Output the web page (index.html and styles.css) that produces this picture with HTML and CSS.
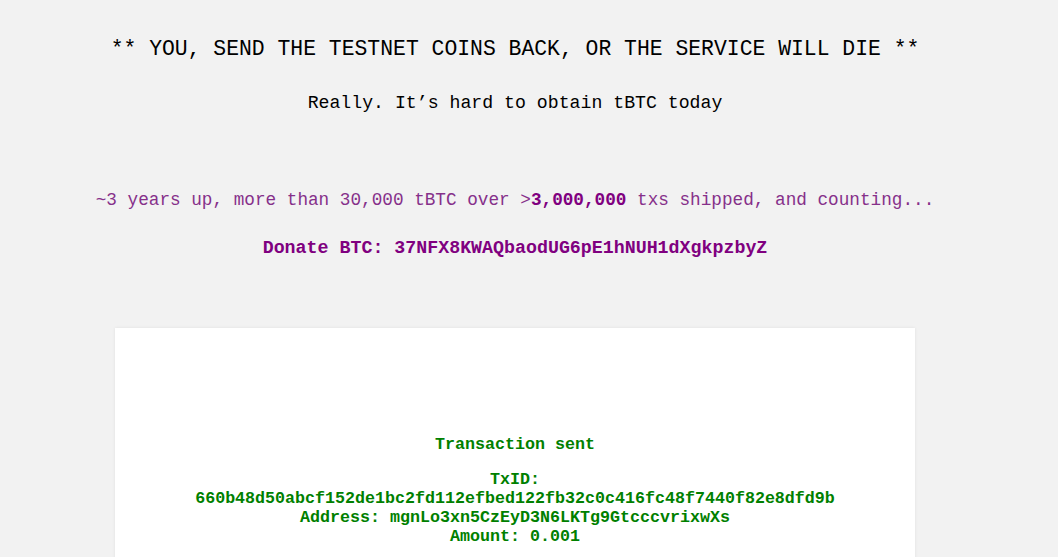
FILE: index.html
```html
<!DOCTYPE html>
<html>
<head>
<meta charset="utf-8">
<title>Testnet Faucet</title>
<link rel="stylesheet" href="styles.css">
</head>
<body>
<div class="page">
  <h1 class="warn">** YOU, SEND THE TESTNET COINS BACK, OR THE SERVICE WILL DIE **</h1>
  <p class="really">Really. It’s hard to obtain tBTC today</p>
  <p class="stats">~3 years up, more than 30,000 tBTC over &gt;<b>3,000,000</b> txs shipped, and counting...</p>
  <p class="donate">Donate BTC: 37NFX8KWAQbaodUG6pE1hNUH1dXgkpzbyZ</p>
  <div class="card">
    <div class="result">
      <div class="title">Transaction sent</div>
      <div>TxID:</div>
      <div>660b48d50abcf152de1bc2fd112efbed122fb32c0c416fc48f7440f82e8dfd9b</div>
      <div>Address: mgnLo3xn5CzEyD3N6LKTg9GtcccvrixwXs</div>
      <div>Amount: 0.001</div>
    </div>
  </div>
</div>
</body>
</html>
```
FILE: styles.css
```css
html, body {
  margin: 0;
  padding: 0;
  background: #f2f2f2;
  overflow: hidden;
}
body {
  font-family: "Liberation Mono", "DejaVu Sans Mono", monospace;
}
.page {
  width: 1030px;
  padding-top: 37px;
  text-align: center;
}
.warn {
  margin: 0;
  font-size: 21.4px;
  line-height: 24px;
  font-weight: normal;
  color: #000;
}
.really {
  margin: 31px 0 0;
  font-size: 18.2px;
  line-height: 22px;
  color: #000;
}
.stats {
  margin: 75px 0 0;
  font-size: 17.7px;
  line-height: 22px;
  color: #86308a;
}
.stats b {
  color: #800080;
}
.donate {
  margin: 26px 0 0;
  font-size: 18.3px;
  line-height: 22px;
  font-weight: bold;
  color: #800080;
}
.card {
  width: 800px;
  margin: 69px auto 0;
  background: #fff;
  box-shadow: 0 0 3px rgba(0, 0, 0, 0.08);
  padding: 107px 0 40px;
}
.result {
  color: #008000;
  font-weight: bold;
  font-size: 16.67px;
  line-height: 19px;
}
.result .title {
  margin-bottom: 16px;
}
```
